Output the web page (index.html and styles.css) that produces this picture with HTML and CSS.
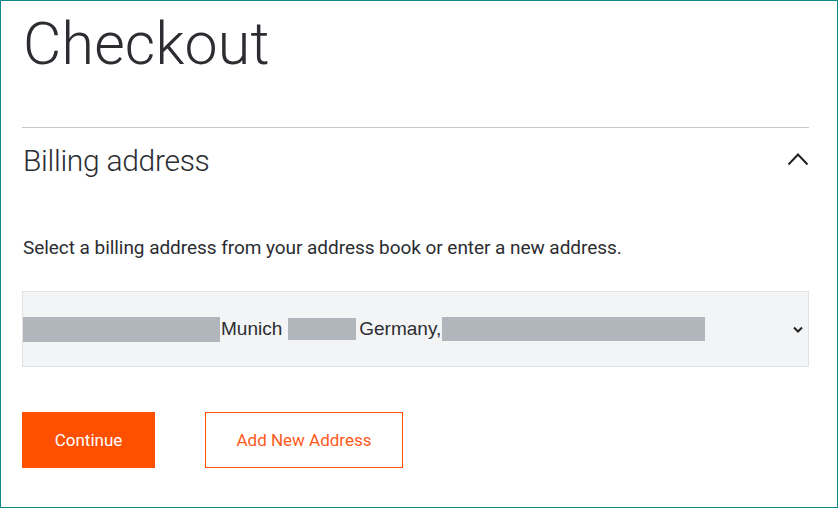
FILE: index.html
```html
<!DOCTYPE html>
<html>
<head>
<meta charset="utf-8">
<link rel="stylesheet" href="styles.css">
</head>
<body>
<div class="frame">
  <h1 class="title">Checkout</h1>
  <section class="section">
    <div class="section-head">
      <h2 class="section-title">Billing address</h2>
      <svg class="chev-up" width="22" height="14" viewBox="0 0 22 14"><path d="M1.5 12.5 L11 2.5 L20.5 12.5" fill="none" stroke="#222" stroke-width="2"/></svg>
    </div>
    <p class="intro">Select a billing address from your address book or enter a new address.</p>
    <div class="select">
      <div class="select-value">
        <span class="redact r1"></span><span class="txt">Munich</span><span class="redact r2"></span><span class="txt">Germany,</span><span class="redact r3"></span>
      </div>
      <svg class="chev-down" width="10" height="7" viewBox="0 0 10 7"><path d="M1 1.5 L5 5.5 L9 1.5" fill="none" stroke="#222" stroke-width="2"/></svg>
    </div>
    <div class="actions">
      <button class="btn btn-primary">Continue</button>
      <button class="btn btn-outline">Add New Address</button>
    </div>
  </section>
</div>
</body>
</html>
```
FILE: styles.css
```css
* { box-sizing: border-box; }
html, body { margin: 0; padding: 0; }
body { font-family: Roboto, "Liberation Sans", sans-serif; color: #2b2d31; background: #fff; }
.frame {
  width: 838px; height: 508px;
  border: 1px solid #0e8a86;
  padding: 0 28px 0 21px;
  overflow: hidden;
}
.title {
  margin: 0; padding-top: 8px; padding-left: 1px;
  font-weight: 300; font-size: 59px; line-height: 70px;
  letter-spacing: 0.2px;
}
.section { margin-top: 48px; border-top: 1px solid #c8c8c8; }
.section-head { display: flex; justify-content: space-between; align-items: center; height: 64px; }
.section-title { margin: 0; font-weight: 300; font-size: 30px; letter-spacing: -0.3px; padding-left: 1px; }
.chev-up { margin-top: -2px; }
.intro { margin: 44px 0 0 1px; font-size: 19px; line-height: 24px; color: #2b2d31; letter-spacing: -0.05px; }
.select {
  margin-top: 31px; height: 76px;
  background: #f3f4f6; border: 1px solid #e0e2e6;
  display: flex; align-items: center; justify-content: space-between;
}
.select-value { display: flex; align-items: center; font-family: "Liberation Sans", Arial, sans-serif; font-size: 19px; color: #2b2d31; }
.redact { display: inline-block; background: #b1b6bd; height: 25px; }
.r1 { width: 197px; }
.r2 { width: 68px; height: 22px; margin: 0 2px 0 6px; }
.r3 { width: 263px; height: 24px; margin-left: 1px; }
.txt { padding-left: 1px; }
.chev-down { margin-right: 5px; }
.actions { display: flex; gap: 50px; margin-top: 45px; }
.btn { height: 56px; font-family: Roboto, "Liberation Sans", sans-serif; font-size: 17px; cursor: pointer; padding: 0; }
.btn-primary { width: 133px; background: #ff5000; color: #fff; border: none; }
.btn-outline { width: 198px; background: #fff; color: #ff5a1a; border: 1px solid #ff5000; }
```
